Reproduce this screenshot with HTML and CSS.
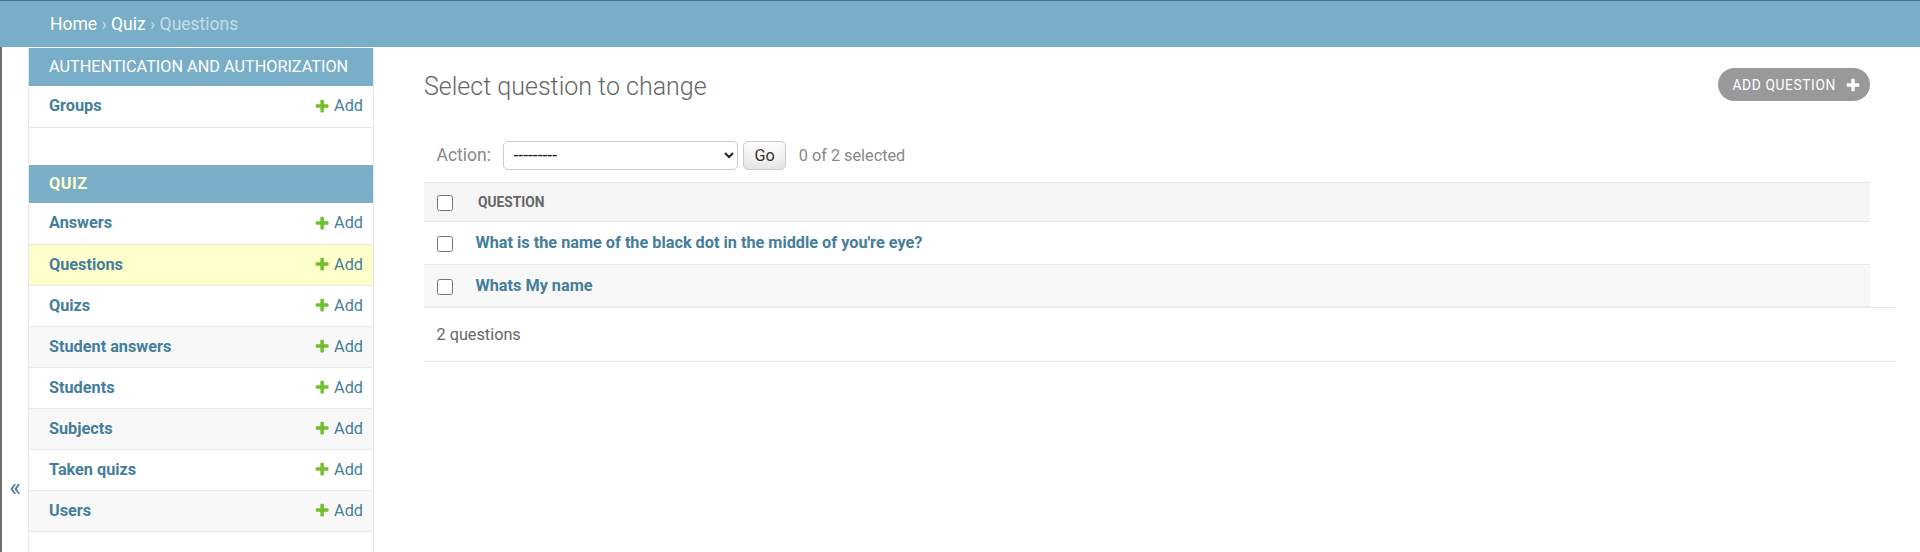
FILE: index.html
```html
<!DOCTYPE html>
<html lang="en">
<head>
<meta charset="utf-8">
<title>Select question to change | Django site admin</title>
<link rel="stylesheet" href="styles.css">
</head>
<body>
<div class="topline"></div>
<nav class="breadcrumbs"><a href="#">Home</a><span class="sep"> › </span><a href="#">Quiz</a><span class="sep"> › </span><span class="current">Questions</span></nav>
<div class="main">
  <div class="edge"></div>
  <button class="toggle-nav" type="button" aria-label="Toggle navigation">«</button>
  <nav class="sidebar">
    <table class="module">
      <caption>Authentication and Authorization</caption>
      <tr class="row1"><th><a href="#">Groups</a></th><td><a class="addlink" href="#"><svg viewBox="0 0 1792 1792"><path fill="#70bf2b" d="M1600 796v192q0 40-28 68t-68 28h-416v416q0 40-28 68t-68 28h-192q-40 0-68-28t-28-68v-416h-416q-40 0-68-28t-28-68v-192q0-40 28-68t68-28h416v-416q0-40 28-68t68-28h192q40 0 68 28t28 68v416h416q40 0 68 28t28 68z"/></svg>Add</a></td></tr>
    </table>
    <table class="module current-app">
      <caption>Quiz</caption>
      <tr class="row1"><th><a href="#">Answers</a></th><td><a class="addlink" href="#"><svg viewBox="0 0 1792 1792"><path fill="#70bf2b" d="M1600 796v192q0 40-28 68t-68 28h-416v416q0 40-28 68t-68 28h-192q-40 0-68-28t-28-68v-416h-416q-40 0-68-28t-28-68v-192q0-40 28-68t68-28h416v-416q0-40 28-68t68-28h192q40 0 68 28t28 68v416h416q40 0 68 28t28 68z"/></svg>Add</a></td></tr>
      <tr class="row2 current-model"><th><a href="#">Questions</a></th><td><a class="addlink" href="#"><svg viewBox="0 0 1792 1792"><path fill="#70bf2b" d="M1600 796v192q0 40-28 68t-68 28h-416v416q0 40-28 68t-68 28h-192q-40 0-68-28t-28-68v-416h-416q-40 0-68-28t-28-68v-192q0-40 28-68t68-28h416v-416q0-40 28-68t68-28h192q40 0 68 28t28 68v416h416q40 0 68 28t28 68z"/></svg>Add</a></td></tr>
      <tr class="row1"><th><a href="#">Quizs</a></th><td><a class="addlink" href="#"><svg viewBox="0 0 1792 1792"><path fill="#70bf2b" d="M1600 796v192q0 40-28 68t-68 28h-416v416q0 40-28 68t-68 28h-192q-40 0-68-28t-28-68v-416h-416q-40 0-68-28t-28-68v-192q0-40 28-68t68-28h416v-416q0-40 28-68t68-28h192q40 0 68 28t28 68v416h416q40 0 68 28t28 68z"/></svg>Add</a></td></tr>
      <tr class="row2"><th><a href="#">Student answers</a></th><td><a class="addlink" href="#"><svg viewBox="0 0 1792 1792"><path fill="#70bf2b" d="M1600 796v192q0 40-28 68t-68 28h-416v416q0 40-28 68t-68 28h-192q-40 0-68-28t-28-68v-416h-416q-40 0-68-28t-28-68v-192q0-40 28-68t68-28h416v-416q0-40 28-68t68-28h192q40 0 68 28t28 68v416h416q40 0 68 28t28 68z"/></svg>Add</a></td></tr>
      <tr class="row1"><th><a href="#">Students</a></th><td><a class="addlink" href="#"><svg viewBox="0 0 1792 1792"><path fill="#70bf2b" d="M1600 796v192q0 40-28 68t-68 28h-416v416q0 40-28 68t-68 28h-192q-40 0-68-28t-28-68v-416h-416q-40 0-68-28t-28-68v-192q0-40 28-68t68-28h416v-416q0-40 28-68t68-28h192q40 0 68 28t28 68v416h416q40 0 68 28t28 68z"/></svg>Add</a></td></tr>
      <tr class="row2"><th><a href="#">Subjects</a></th><td><a class="addlink" href="#"><svg viewBox="0 0 1792 1792"><path fill="#70bf2b" d="M1600 796v192q0 40-28 68t-68 28h-416v416q0 40-28 68t-68 28h-192q-40 0-68-28t-28-68v-416h-416q-40 0-68-28t-28-68v-192q0-40 28-68t68-28h416v-416q0-40 28-68t68-28h192q40 0 68 28t28 68v416h416q40 0 68 28t28 68z"/></svg>Add</a></td></tr>
      <tr class="row1"><th><a href="#">Taken quizs</a></th><td><a class="addlink" href="#"><svg viewBox="0 0 1792 1792"><path fill="#70bf2b" d="M1600 796v192q0 40-28 68t-68 28h-416v416q0 40-28 68t-68 28h-192q-40 0-68-28t-28-68v-416h-416q-40 0-68-28t-28-68v-192q0-40 28-68t68-28h416v-416q0-40 28-68t68-28h192q40 0 68 28t28 68v416h416q40 0 68 28t28 68z"/></svg>Add</a></td></tr>
      <tr class="row2"><th><a href="#">Users</a></th><td><a class="addlink" href="#"><svg viewBox="0 0 1792 1792"><path fill="#70bf2b" d="M1600 796v192q0 40-28 68t-68 28h-416v416q0 40-28 68t-68 28h-192q-40 0-68-28t-28-68v-416h-416q-40 0-68-28t-28-68v-192q0-40 28-68t68-28h416v-416q0-40 28-68t68-28h192q40 0 68 28t28 68v416h416q40 0 68 28t28 68z"/></svg>Add</a></td></tr>
    </table>
  </nav>
  <main class="content">
    <div class="content-head">
      <h1>Select question to change</h1>
      <a class="add-button" href="#">Add question<svg viewBox="0 0 1792 1792"><path fill="#fff" d="M1600 796v192q0 40-28 68t-68 28h-416v416q0 40-28 68t-68 28h-192q-40 0-68-28t-28-68v-416h-416q-40 0-68-28t-28-68v-192q0-40 28-68t68-28h416v-416q0-40 28-68t68-28h192q40 0 68 28t28 68v416h416q40 0 68 28t28 68z"/></svg></a>
    </div>
    <div class="actions">
      <label class="action-label">Action:</label>
      <select class="action-select"><option>---------</option><option>Delete selected questions</option></select>
      <button class="go" type="button">Go</button>
      <span class="counter">0 of 2 selected</span>
    </div>
    <table class="results">
      <thead>
        <tr><th class="cb-col"><input type="checkbox"></th><th class="col-text">Question</th></tr>
      </thead>
      <tbody>
        <tr class="row1"><td class="cb-col"><input type="checkbox"></td><td><a href="#">What is the name of the black dot in the middle of you're eye?</a></td></tr>
        <tr class="row2"><td class="cb-col"><input type="checkbox"></td><td><a href="#">Whats My name</a></td></tr>
      </tbody>
    </table>
    <p class="paginator">2 questions</p>
  </main>
</div>
</body>
</html>
```

FILE: styles.css
```css
* { box-sizing: border-box; }
html, body { margin: 0; padding: 0; }
body {
  font-family: Roboto, "Liberation Sans", Arial, sans-serif;
  font-size: 17.5px;
  color: #333;
  background: #fff;
}
a { text-decoration: none; color: #447e9b; }

.topline { height: 1px; background: #417690; }
.breadcrumbs {
  height: 46px;
  padding: 0 50px;
  background: #79aec8;
  color: #c4dce8;
  font-size: 17.5px;
  line-height: 46px;
  white-space: pre;
}
.breadcrumbs a { color: #fff; }
.breadcrumbs .current { color: #c4dce8; }

.main { display: flex; height: calc(100vh - 47px); overflow: hidden; }
.edge { flex: 0 0 2px; background: #6f6f6f; }
.toggle-nav {
  flex: 0 0 27px;
  width: 27px;
  border: 0;
  border-right: 1px solid #e8e8e8;
  background: #fff;
  color: #447e9b;
  font-family: Roboto, "Liberation Sans", Arial, sans-serif;
  font-size: 25px;
  line-height: 30px;
  padding: 426px 0 0;
  display: flex;
  justify-content: center;
  align-items: flex-start;
}

.sidebar {
  flex: 0 0 345px;
  width: 345px;
  border-right: 1px solid #e8e8e8;
  border-top: 1px solid transparent;
}
.module { width: 100%; border-collapse: collapse; margin-bottom: 37.5px; }
.module caption {
  caption-side: top;
  text-align: left;
  background: #79aec8;
  color: #fff;
  font-size: 16.25px;
  letter-spacing: 0;
  text-transform: uppercase;
  padding: 10px 20px;
  line-height: 18px;
  font-weight: 400;
  white-space: nowrap;
}
.current-app caption { color: #ffc; font-weight: 700; letter-spacing: 0.5px; }
.module th, .module td {
  padding: 10px;
  height: 41px;
  line-height: 20px;
  border-bottom: 1px solid #e8e8e8;
  font-size: 16.25px;
  text-align: left;
  vertical-align: top;
}
.module th { width: 100%; padding-left: 20px; font-weight: 700; }
.module td { white-space: nowrap; }
.row1 { background: #fff; }
.row2 { background: #f8f8f8; }
.module .current-model { background: #ffc; }
.addlink {
  display: inline-flex;
  align-items: center;
  gap: 3.75px;
  height: 20px;
  vertical-align: top;
  font-weight: 400;
}
.addlink svg { width: 16.25px; height: 16.25px; flex: none; }

.content { flex: 1; min-width: 0; padding: 25px 50px 0 50px; }
.content-head { display: flex; justify-content: space-between; align-items: flex-start; }
.content-head h1 {
  margin: 0 0 26px;
  font-size: 25px;
  font-weight: 300;
  color: #666;
  line-height: 30px;
}
.add-button {
  display: flex;
  align-items: center;
  gap: 9px;
  height: 33px;
  margin-top: -4px;
  padding: 0 9px 0 15px;
  border-radius: 17px;
  background: #999;
  color: #fff;
  font-size: 13.75px;
  letter-spacing: 0.625px;
  text-transform: uppercase;
}
.add-button svg { width: 16px; height: 16px; }

.actions {
  display: flex;
  align-items: center;
  padding: 12.5px;
  color: #888;
  font-size: 17.5px;
}
.action-select {
  margin-left: 12.5px;
  width: 235px;
  height: 29px;
  border: 1px solid #ccc;
  border-radius: 5px;
  padding: 0 0 0 5px;
  background: #fff;
  color: #222;
  font-family: Roboto, "Liberation Sans", Arial, sans-serif;
  font-size: 17.5px;
}
.go {
  margin-left: 5px;
  height: 29px;
  padding: 0 10px;
  border: 1px solid #ccc;
  border-radius: 5px;
  background: #fff;
  box-shadow: 0 -18px 25px -12px rgba(0, 0, 0, 0.15) inset;
  color: #333;
  font-family: Roboto, "Liberation Sans", Arial, sans-serif;
  font-size: 16.25px;
}
.counter { margin-left: 13px; font-size: 16.25px; }

.results { width: 100%; border-collapse: collapse; }
.results thead th {
  background: #f5f5f5;
  border-top: 1px solid #e8e8e8;
  border-bottom: 1px solid #e8e8e8;
  padding: 10px 12.5px;
  line-height: 18px;
  font-size: 13.75px;
  font-weight: 700;
  color: #666;
  text-transform: uppercase;
  text-align: left;
  vertical-align: middle;
}
.results td {
  padding: 10px;
  line-height: 21.5px;
  border-bottom: 1px solid #e8e8e8;
  font-size: 16.25px;
  vertical-align: middle;
}
.results td a { font-weight: 700; }
.results .cb-col { width: 41.5px; padding-left: 0; padding-right: 0; text-align: center; }
.results input[type="checkbox"] { width: 16px; height: 16px; margin: 0; vertical-align: middle; }

.paginator {
  margin: 0 -25px 0 0;
  padding: 12.5px;
  line-height: 27.5px;
  border-top: 1px solid #e8e8e8;
  border-bottom: 1px solid #e8e8e8;
  color: #666;
  font-size: 16.25px;
}
```
